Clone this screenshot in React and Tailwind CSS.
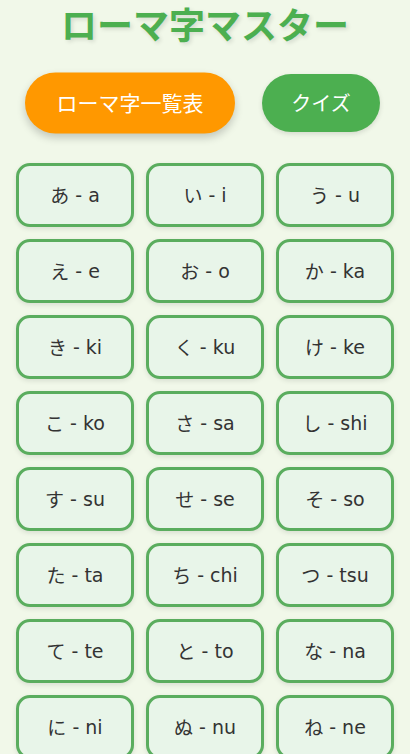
import React from "react";

const kana = [
  ["あ", "a"], ["い", "i"], ["う", "u"], ["え", "e"], ["お", "o"],
  ["か", "ka"], ["き", "ki"], ["く", "ku"], ["け", "ke"], ["こ", "ko"],
  ["さ", "sa"], ["し", "shi"], ["す", "su"], ["せ", "se"], ["そ", "so"],
  ["た", "ta"], ["ち", "chi"], ["つ", "tsu"], ["て", "te"], ["と", "to"],
  ["な", "na"], ["に", "ni"], ["ぬ", "nu"], ["ね", "ne"], ["の", "no"],
  ["は", "ha"], ["ひ", "hi"], ["ふ", "fu"], ["へ", "he"], ["ほ", "ho"],
  ["ま", "ma"], ["み", "mi"], ["む", "mu"], ["め", "me"], ["も", "mo"],
  ["や", "ya"], ["ゆ", "yu"], ["よ", "yo"],
  ["ら", "ra"], ["り", "ri"], ["る", "ru"], ["れ", "re"], ["ろ", "ro"],
  ["わ", "wa"], ["を", "wo"], ["ん", "n"],
];

export default function App() {
  return (
    <div className="min-h-screen bg-[#f1f8e9] font-['Noto_Sans_CJK_JP',sans-serif]">
      <h1 className="pt-[2px] text-center text-[36px] leading-[43px] font-bold text-[#4caf50] [text-shadow:2px_2px_4px_rgba(0,0,0,0.12)]">
        ローマ字マスター
      </h1>
      <div className="mt-[29px] flex items-center justify-center gap-[32px]">
        <button className="scale-105 rounded-full bg-[#ff9800] px-[30px] py-[14px] text-[20px] leading-[30px] text-white shadow-[0_4px_8px_rgba(0,0,0,0.2)]">
          ローマ字一覧表
        </button>
        <button className="rounded-full bg-[#4caf50] px-[29px] py-[14px] text-[20px] leading-[30px] text-white shadow-[0_2px_5px_rgba(0,0,0,0.12)]">
          クイズ
        </button>
      </div>
      <div className="mt-[31px] grid grid-cols-3 gap-[12px] px-[16px] pb-[16px]">
        {kana.map(([k, r]) => (
          <div
            key={k}
            className="flex h-[64px] items-center justify-center rounded-[14px] border-[3px] border-[#5aad5e] bg-[#e8f5e9] text-[19px] text-[#333] shadow-[0_2px_5px_rgba(0,0,0,0.1)]"
          >
            <span className="font-['Noto_Sans_CJK_JP',sans-serif]">{k}</span>
            <span className="font-['DejaVu_Sans','Noto_Sans_CJK_JP',sans-serif]">&nbsp;-&nbsp;{r}</span>
          </div>
        ))}
      </div>
    </div>
  );
}
